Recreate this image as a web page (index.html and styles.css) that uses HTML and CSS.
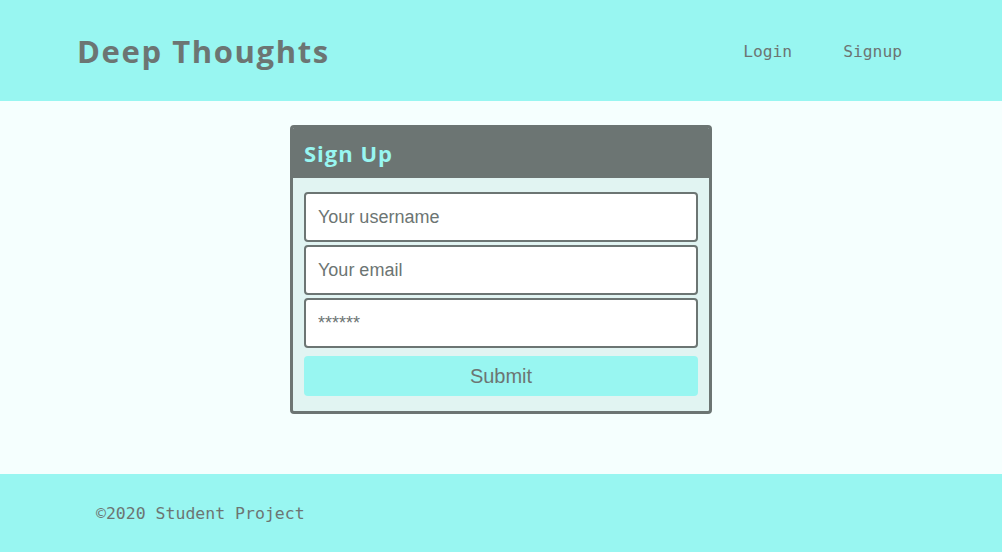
FILE: index.html
```html
<!DOCTYPE html>
<html lang="en">
<head>
<meta charset="utf-8">
<title>Deep Thoughts</title>
<link rel="stylesheet" href="styles.css">
</head>
<body>
<header class="site-header">
  <h1 class="brand">Deep Thoughts</h1>
  <nav class="nav">
    <a href="#" class="nav-link">Login</a>
    <a href="#" class="nav-link">Signup</a>
  </nav>
</header>
<main class="main">
  <section class="card">
    <h2 class="card-title">Sign Up</h2>
    <form class="card-body">
      <input class="field" type="text" placeholder="Your username">
      <input class="field" type="email" placeholder="Your email">
      <input class="field" type="password" placeholder="******">
      <button class="submit" type="submit">Submit</button>
    </form>
  </section>
</main>
<footer class="site-footer">
  <span class="copy">&copy;2020 Student Project</span>
</footer>
</body>
</html>
```
FILE: styles.css
```css
* { box-sizing: border-box; }
html, body { margin: 0; padding: 0; }
body {
  height: 552px;
  display: flex;
  flex-direction: column;
  background: #f5fffe;
  color: #6c7573;
  font-family: "Liberation Sans", Arial, sans-serif;
}
.site-header {
  height: 101px;
  background: #98f6f1;
  display: flex;
  align-items: center;
  justify-content: space-between;
  padding: 0 100px 0 77px;
  flex-shrink: 0;
}
.brand {
  margin: 0;
  font-family: "Open Sans", sans-serif;
  font-weight: 700;
  font-size: 31px;
  letter-spacing: 1.6px;
  color: #6c7573;
}
.nav { display: flex; gap: 51px; padding-top: 2px; }
.nav-link {
  font-family: "DejaVu Sans Mono", monospace;
  font-size: 16.3px;
  color: #6c7573;
  text-decoration: none;
}
.main {
  flex: 1;
  display: flex;
  justify-content: center;
  align-items: flex-start;
  padding-top: 24px;
}
.card {
  width: 422px;
  border: 3px solid #6c7573;
  border-radius: 4px;
  background: #e1f4f2;
  overflow: hidden;
}
.card-title {
  margin: 0;
  height: 50px;
  background: #6c7573;
  color: #98f6f1;
  font-family: "Open Sans", sans-serif;
  font-weight: 700;
  font-size: 22px;
  letter-spacing: 1px;
  display: flex;
  align-items: center;
  padding-left: 11px;
}
.card-body {
  display: flex;
  flex-direction: column;
  gap: 3px;
  padding: 14px 11px 15px;
}
.field {
  height: 50px;
  border: 2px solid #6c7573;
  border-radius: 4px;
  background: #fff;
  padding: 1px 12px 0;
  font-family: "Liberation Sans", Arial, sans-serif;
  font-size: 18px;
  color: #6c7573;
}
.field::placeholder { color: #6c7573; opacity: 1; }
.submit {
  margin-top: 5px;
  height: 40px;
  border: none;
  border-radius: 4px;
  background: #98f6f1;
  color: #6c7573;
  font-family: "Liberation Sans", Arial, sans-serif;
  font-size: 20px;
}
.site-footer {
  height: 78px;
  background: #98f6f1;
  display: flex;
  align-items: center;
  padding-left: 96px;
  flex-shrink: 0;
}
.copy {
  font-family: "DejaVu Sans Mono", monospace;
  font-size: 16.5px;
  color: #6c7573;
}
```
